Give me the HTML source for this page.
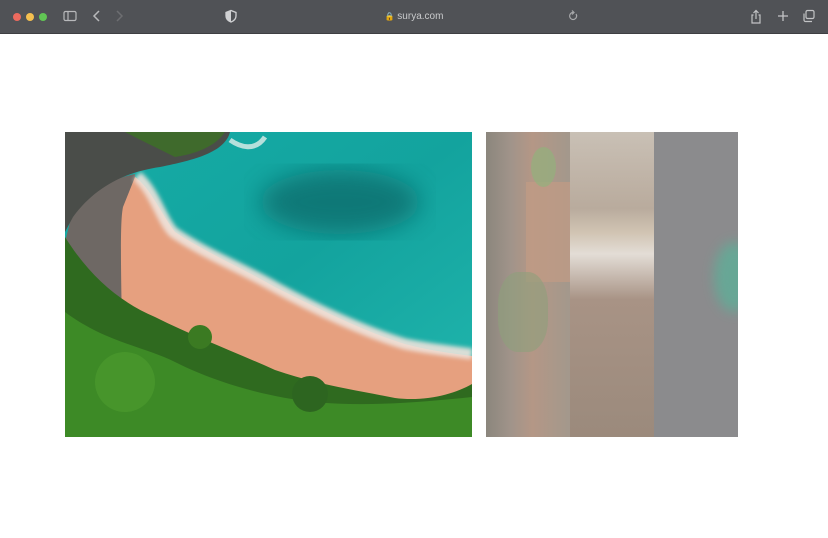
<!DOCTYPE html>
<html><head><meta charset="utf-8"><style>
*{margin:0;padding:0;box-sizing:border-box}
body{width:828px;height:538px;background:#fff;position:relative;overflow:hidden;font-family:"Liberation Sans",sans-serif}
.bar{position:absolute;left:0;top:0;width:828px;height:34px;background:#505256;border-bottom:1px solid #3e3f42}
.dot{position:absolute;top:13px;width:8px;height:8px;border-radius:50%}
.url{position:absolute;left:0;width:828px;top:11px;text-align:center;color:#c9cacc;font-size:10px}
.ic{position:absolute;top:9px}
.p{position:absolute;top:132px;height:305px}
</style></head><body>
<div class="bar">
<div class="dot" style="left:13px;background:#ec6a5e"></div>
<div class="dot" style="left:26px;background:#f4bf4f"></div>
<div class="dot" style="left:39px;background:#61c554"></div>
<svg class="ic" style="left:63px" width="14" height="14" viewBox="0 0 14 14" fill="none" stroke="#b8b9bb" stroke-width="1.2"><rect x="1" y="2.5" width="12" height="9" rx="1.5"/><line x1="5" y1="2.5" x2="5" y2="11.5"/></svg>
<svg class="ic" style="left:92px" width="10" height="14" viewBox="0 0 10 14" fill="none" stroke="#b8b9bb" stroke-width="1.5"><path d="M7 2 L2 7 L7 12"/></svg>
<svg class="ic" style="left:114px" width="10" height="14" viewBox="0 0 10 14" fill="none" stroke="#6d6e71" stroke-width="1.5"><path d="M3 2 L8 7 L3 12"/></svg>
<svg class="ic" style="left:224px" width="14" height="14" viewBox="0 0 14 14"><path d="M7 1.5 L12 3.5 V7 C12 10 9.5 12 7 13 C4.5 12 2 10 2 7 V3.5 Z" fill="none" stroke="#d0d1d3" stroke-width="1.3"/><path d="M7 1.5 V13 C4.5 12 2 10 2 7 V3.5Z" fill="#d0d1d3"/></svg>
<div class="url"><span style="font-size:8px">&#128274;</span> surya.com</div>
<svg class="ic" style="left:567px" width="12" height="14" viewBox="0 0 12 14" fill="none" stroke="#a9aaac" stroke-width="1.2"><path d="M9 5 A3.5 3.5 0 1 1 6 3.5"/><path d="M5 1.5 L7 3.5 L5 5.5"/></svg>
<svg class="ic" style="left:749px" width="14" height="16" viewBox="0 0 14 16" fill="none" stroke="#c2c3c5" stroke-width="1.2"><path d="M4.5 6 H3 V14 H11 V6 H9.5"/><path d="M7 10 V1.5 M4.5 4 L7 1.5 L9.5 4"/></svg>
<svg class="ic" style="left:776px" width="14" height="14" viewBox="0 0 14 14" stroke="#c2c3c5" stroke-width="1.3"><path d="M7 2 V12 M2 7 H12"/></svg>
<svg class="ic" style="left:802px" width="14" height="14" viewBox="0 0 14 14" fill="none" stroke="#c2c3c5" stroke-width="1.2"><rect x="4" y="1.5" width="8" height="8" rx="1.5"/><path d="M2 4.5 V11 a1.5 1.5 0 0 0 1.5 1.5 H10"/></svg>
</div>

<svg class="p" style="left:65px" width="407" height="305" viewBox="0 0 407 305">
<defs>
<linearGradient id="w" x1="0" y1="0" x2="1" y2="1"><stop offset="0" stop-color="#16aca6"/><stop offset=".5" stop-color="#13a39e"/><stop offset="1" stop-color="#22b7ae"/></linearGradient>
<filter id="b"><feGaussianBlur stdDeviation="12"/></filter>
<filter id="b2"><feGaussianBlur stdDeviation="2"/></filter>
</defs>
<rect width="407" height="305" fill="url(#w)"/>
<ellipse cx="275" cy="70" rx="80" ry="32" fill="#0c6a6a" opacity=".75" filter="url(#b)"/>
<path d="M70 42 C40 48 15 65 5 90 L0 110 V305 H80 Z" fill="#6e6864"/>
<path d="M70 45 C85 55 95 80 110 100 C140 120 175 135 210 155 C250 175 300 200 340 212 C370 220 395 222 407 224 V305 H60 C55 130 55 90 58 75 Z" fill="#e6a07f"/>
<path d="M72 44 C90 60 95 85 108 100 C140 122 175 135 210 155 C250 177 300 200 340 212 C370 218 395 220 407 222" fill="none" stroke="#eee3dc" stroke-width="11" opacity=".9" filter="url(#b2)"/>
<path d="M0 0 H165 C160 20 130 28 95 35 C60 40 30 55 8 85 L0 100 Z" fill="#4a4d49"/>
<path d="M60 0 H160 C150 15 130 22 110 25 C90 15 75 8 60 0Z" fill="#3f6a2c"/>
<path d="M165 8 C175 15 190 20 200 5" fill="none" stroke="#dfeeea" stroke-width="5" opacity=".8"/>
<path d="M0 105 C25 145 55 170 90 185 C130 205 170 220 210 238 C250 252 290 258 330 266 C360 270 390 262 407 252 V305 H0 Z" fill="#2f6a1f"/>
<path d="M0 180 C40 210 80 215 110 230 C150 250 200 265 250 270 C300 275 360 270 407 265 V305 H0Z" fill="#3d8a26"/>
<circle cx="245" cy="262" r="18" fill="#2d6520"/>
<circle cx="135" cy="205" r="12" fill="#3b7a22"/>
<circle cx="60" cy="250" r="30" fill="#4b9a2e" opacity=".7"/>
</svg>

<div class="p" style="left:486px;width:84px;background:linear-gradient(90deg,#8b867d 0%,#a1948a 30%,#b49786 55%,#a3988c 100%)">
<div style="position:absolute;left:40px;top:50px;width:44px;height:100px;background:#c29b85;opacity:.7"></div>
<div style="position:absolute;left:12px;top:140px;width:50px;height:80px;background:#8ea07c;opacity:.6;border-radius:40%"></div>
<div style="position:absolute;left:45px;top:15px;width:25px;height:40px;background:#93b07c;opacity:.7;border-radius:50%"></div>
</div>
<div class="p" style="left:570px;width:84px;background:linear-gradient(180deg,#c9c0b5 0%,#b9ab9d 25%,#d1c4b3 33%,#e3ddd6 40%,#a89385 55%,#9b8a7c 100%)"></div>
<div class="p" style="left:654px;width:84px;background:#8b8b8d;overflow:hidden">
<div style="position:absolute;left:60px;top:110px;width:40px;height:70px;border-radius:50%;background:#5fae98;filter:blur(6px);opacity:.8"></div>
</div>
</body></html>
